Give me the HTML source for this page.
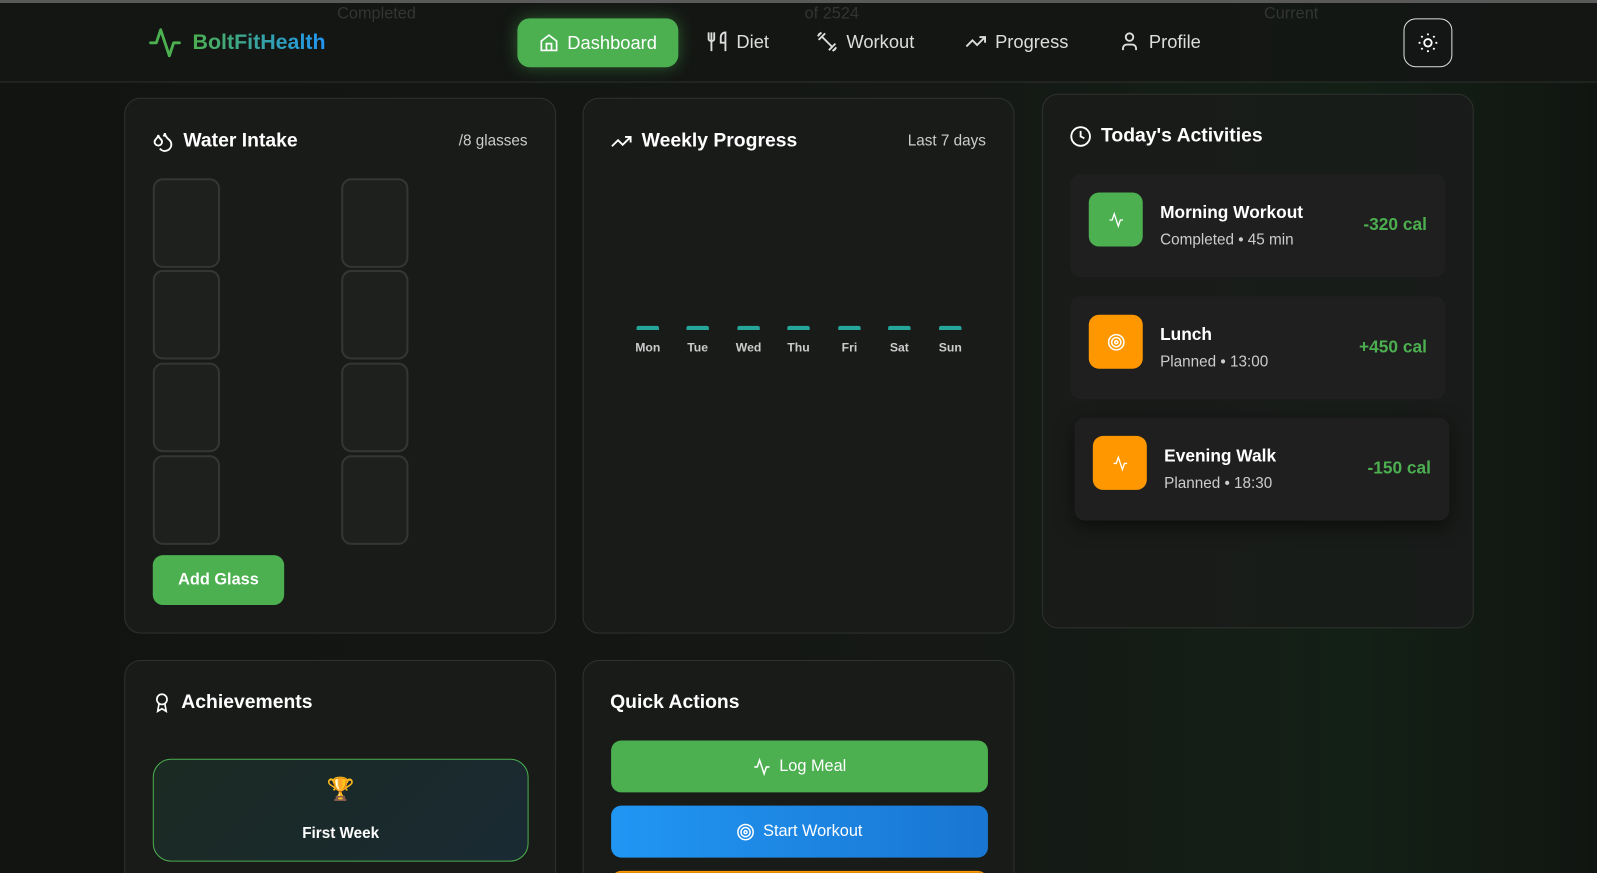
<!DOCTYPE html>
<html><head><meta charset="utf-8"><style>
*{box-sizing:border-box;margin:0;padding:0}
html,body{width:1597px;height:873px;overflow:hidden}
body{font-family:"Liberation Sans",sans-serif;background:linear-gradient(90deg,#121412 0%,#151815 60%,#132016 85%,#111511 100%);color:#fff;position:relative}
#w{position:absolute;left:0;top:0;width:1568px;height:857px;overflow:hidden;transform:scale(1.0185);transform-origin:0 0}
.top{position:absolute;left:0;top:0;width:100%;height:3px;background:#5a5a5a}
.hdr{position:absolute;left:0;top:3px;width:100%;height:78px;border-bottom:1px solid #2e302e;background:rgba(20,22,20,.9)}
.ghost{position:absolute;top:2px;color:#333533;font-size:16px}
.logo{position:absolute;left:145px;top:22px;display:flex;align-items:center;gap:10px;font-weight:bold;font-size:21px}
.logo span{background:linear-gradient(90deg,#4caf50,#2196f3);-webkit-background-clip:text;color:transparent}
.nav{position:absolute;top:15px;display:flex;align-items:center;gap:8px;font-size:18px;color:#ddd}
.dash{left:508px;width:158px;height:48px;background:#4caf50;border-radius:12px;justify-content:center;color:#fff;box-shadow:0 0 16px rgba(76,175,80,.45)}
.theme{position:absolute;left:1378px;top:15px;width:48px;height:48px;border:1.5px solid #ddd;border-radius:12px;display:flex;align-items:center;justify-content:center}
.card{position:absolute;background:rgba(26,28,26,.9);border:1px solid #2f322f;border-radius:16px}
.ttl{position:absolute;left:26px;top:31px;font-size:19px;font-weight:bold;display:flex;align-items:center;gap:9px}
.sub{position:absolute;right:27px;top:33px;font-size:15px;color:#ccc}
.glass{position:absolute;width:66px;height:88px;border:2px solid #343634;border-radius:10px;background:#1e201e}
.btn{position:absolute;border-radius:10px;display:flex;align-items:center;justify-content:center;gap:8px;font-weight:bold;font-size:16px}
.bar{position:absolute;top:223px;width:22px;height:4px;border-radius:2px 2px 0 0;background:#26a69a}
.day{position:absolute;top:237px;font-size:12px;font-weight:bold;color:#ccc;width:40px;text-align:center}
.act{position:absolute;left:27px;width:368px;height:101px;background:#1f1f1f;border-radius:10px}
.ic{position:absolute;left:18px;top:18px;width:53px;height:53px;border-radius:10px;display:flex;align-items:center;justify-content:center}
.an{position:absolute;left:88px;top:28px;font-size:17px;font-weight:bold}
.as{position:absolute;left:88px;top:56px;font-size:15px;color:#ccc}
.cal{position:absolute;right:18px;top:40px;font-size:17px;font-weight:bold;color:#4caf50}
</style></head><body><div id="w">
<div class="top"></div>
<div class="hdr">
<div class="ghost" style="left:331px">Completed</div>
<div class="ghost" style="left:790px">of 2524</div>
<div class="ghost" style="left:1241px">Current</div>
<div class="logo"><svg width="34" height="34" viewBox="0 0 24 24" fill="none" stroke="#4caf50" stroke-width="2" stroke-linecap="round" stroke-linejoin="round"><path d="M22 12h-4l-3 9L9 3l-3 9H2"/></svg><span>BoltFitHealth</span></div>
<div class="nav dash"><svg width="20" height="20" viewBox="0 0 24 24" fill="none" stroke="#fff" stroke-width="2"><path d="M3 10l9-7 9 7v11H3z"/><path d="M9 21v-8h6v8"/></svg>Dashboard</div>
<div class="nav" style="left:693px;top:27px"><svg width="22" height="22" viewBox="0 0 24 24" fill="none" stroke="#ddd" stroke-width="2"><path d="M3 2v7c0 1.1.9 2 2 2h2a2 2 0 002-2V2M6 2v20M21 15V2a5 5 0 00-5 5v6h5zm0 0v7"/></svg>Diet</div>
<div class="nav" style="left:801px;top:27px"><svg width="22" height="22" viewBox="0 0 24 24" fill="none" stroke="#ddd" stroke-width="2"><path d="M6.5 6.5l11 11M21 21l-1-1M3 3l1 1M18 22l4-4M2 6l4-4M3 10l7-7M14 21l7-7"/></svg>Workout</div>
<div class="nav" style="left:947px;top:27px"><svg width="22" height="22" viewBox="0 0 24 24" fill="none" stroke="#ddd" stroke-width="2"><path d="M22 7l-8.5 8.5-5-5L2 17M16 7h6v6"/></svg>Progress</div>
<div class="nav" style="left:1098px;top:27px"><svg width="22" height="22" viewBox="0 0 24 24" fill="none" stroke="#ddd" stroke-width="2"><circle cx="12" cy="7" r="4"/><path d="M19 21v-2a4 4 0 00-4-4H9a4 4 0 00-4 4v2"/></svg>Profile</div>
<div class="theme"><svg width="22" height="22" viewBox="0 0 24 24" fill="none" stroke="#fff" stroke-width="2"><circle cx="12" cy="12" r="4"/><path d="M12 2v2M12 20v2M4.9 4.9l1.4 1.4M17.7 17.7l1.4 1.4M2 12h2M20 12h2M6.3 17.7l-1.4 1.4M19.1 4.9l-1.4 1.4"/></svg></div>
</div>

<div class="card" style="left:122px;top:96px;width:424px;height:526px">
<div class="ttl"><svg width="22" height="22" viewBox="0 0 24 24" fill="none" stroke="#fff" stroke-width="2"><path d="M7 16.3c2.2 0 4-1.8 4-4 0-1.2-.6-2.3-1.800-3.3S7.3 6.5 7 5c-.3 1.5-1.1 3-2.2 4S3 11.1 3 12.3c0 2.2 1.8 4 4 4z"/><path d="M12.6 6.6A11 11 0 0014 3c.5 2.5 2 4.9 4 6.5s3 3.5 3 5.5a7 7 0 01-12.4 4.5"/></svg>Water Intake</div>
<div class="sub">/8 glasses</div>
<div class="glass" style="left:27px;top:78px"></div><div class="glass" style="left:212px;top:78px"></div>
<div class="glass" style="left:27px;top:168px"></div><div class="glass" style="left:212px;top:168px"></div>
<div class="glass" style="left:27px;top:259px"></div><div class="glass" style="left:212px;top:259px"></div>
<div class="glass" style="left:27px;top:350px"></div><div class="glass" style="left:212px;top:350px"></div>
<div class="btn" style="left:27px;top:448px;width:129px;height:49px;background:#4caf50">Add Glass</div>
</div>

<div class="card" style="left:572px;top:96px;width:424px;height:526px">
<div class="ttl"><svg width="22" height="22" viewBox="0 0 24 24" fill="none" stroke="#fff" stroke-width="2"><path d="M22 7l-8.5 8.5-5-5L2 17M16 7h6v6"/></svg>Weekly Progress</div>
<div class="sub">Last 7 days</div>
<div class="bar" style="left:52px"></div><div class="day" style="left:43px">Mon</div>
<div class="bar" style="left:101px"></div><div class="day" style="left:92px">Tue</div>
<div class="bar" style="left:151px"></div><div class="day" style="left:142px">Wed</div>
<div class="bar" style="left:200px"></div><div class="day" style="left:191px">Thu</div>
<div class="bar" style="left:250px"></div><div class="day" style="left:241px">Fri</div>
<div class="bar" style="left:299px"></div><div class="day" style="left:290px">Sat</div>
<div class="bar" style="left:349px"></div><div class="day" style="left:340px">Sun</div>
</div>

<div class="card" style="left:1023px;top:92px;width:424px;height:525px">
<div class="ttl" style="top:30px"><svg width="22" height="22" viewBox="0 0 24 24" fill="none" stroke="#fff" stroke-width="2"><circle cx="12" cy="12" r="10"/><path d="M12 6v6l4 2"/></svg>Today's Activities</div>
<div class="act" style="top:78px"><div class="ic" style="background:#4caf50"><svg width="16" height="16" viewBox="0 0 24 24" fill="none" stroke="#fff" stroke-width="2"><path d="M22 12h-4l-3 9L9 3l-3 9H2"/></svg></div><div class="an">Morning Workout</div><div class="as">Completed • 45 min</div><div class="cal">-320 cal</div></div>
<div class="act" style="top:198px"><div class="ic" style="background:#ff9800"><svg width="18" height="18" viewBox="0 0 24 24" fill="none" stroke="#fff" stroke-width="2"><circle cx="12" cy="12" r="10"/><circle cx="12" cy="12" r="6"/><circle cx="12" cy="12" r="2"/></svg></div><div class="an">Lunch</div><div class="as">Planned • 13:00</div><div class="cal">+450 cal</div></div>
<div class="act" style="top:317px;left:31px;box-shadow:0 6px 18px rgba(0,0,0,.5)"><div class="ic" style="background:#ff9800"><svg width="16" height="16" viewBox="0 0 24 24" fill="none" stroke="#fff" stroke-width="2"><path d="M22 12h-4l-3 9L9 3l-3 9H2"/></svg></div><div class="an">Evening Walk</div><div class="as">Planned • 18:30</div><div class="cal">-150 cal</div></div>
</div>

<div class="card" style="left:122px;top:648px;width:424px;height:260px">
<div class="ttl" style="top:30px"><svg width="20" height="22" viewBox="0 0 24 24" fill="none" stroke="#fff" stroke-width="2"><circle cx="12" cy="8" r="6"/><path d="M15.5 13.5L17 22l-5-3-5 3 1.5-8.5"/></svg>Achievements</div>
<div style="position:absolute;left:27px;top:96px;width:369px;height:101px;border:1px solid #4caf50;border-radius:18px;background:linear-gradient(135deg,#1b2a22,#1a2a33)">
<div style="position:absolute;width:100%;top:16px;text-align:center;font-size:22px">🏆</div>
<div style="position:absolute;width:100%;top:64px;text-align:center;font-size:15px;font-weight:bold">First Week</div></div>
</div>

<div class="card" style="left:572px;top:648px;width:424px;height:260px">
<div class="ttl" style="top:30px">Quick Actions</div>
<div class="btn" style="left:27px;top:78px;width:370px;height:51px;background:#4caf50;font-weight:normal"><svg width="18" height="18" viewBox="0 0 24 24" fill="none" stroke="#fff" stroke-width="2"><path d="M22 12h-4l-3 9L9 3l-3 9H2"/></svg>Log Meal</div>
<div class="btn" style="left:27px;top:142px;width:370px;height:51px;background:linear-gradient(90deg,#2196f3,#1976d2);font-weight:normal"><svg width="18" height="18" viewBox="0 0 24 24" fill="none" stroke="#fff" stroke-width="2"><circle cx="12" cy="12" r="10"/><circle cx="12" cy="12" r="6"/><circle cx="12" cy="12" r="2"/></svg>Start Workout</div>
<div class="btn" style="left:27px;top:206px;width:370px;height:51px;background:#ff9800"></div>
</div>
</div></body></html>
